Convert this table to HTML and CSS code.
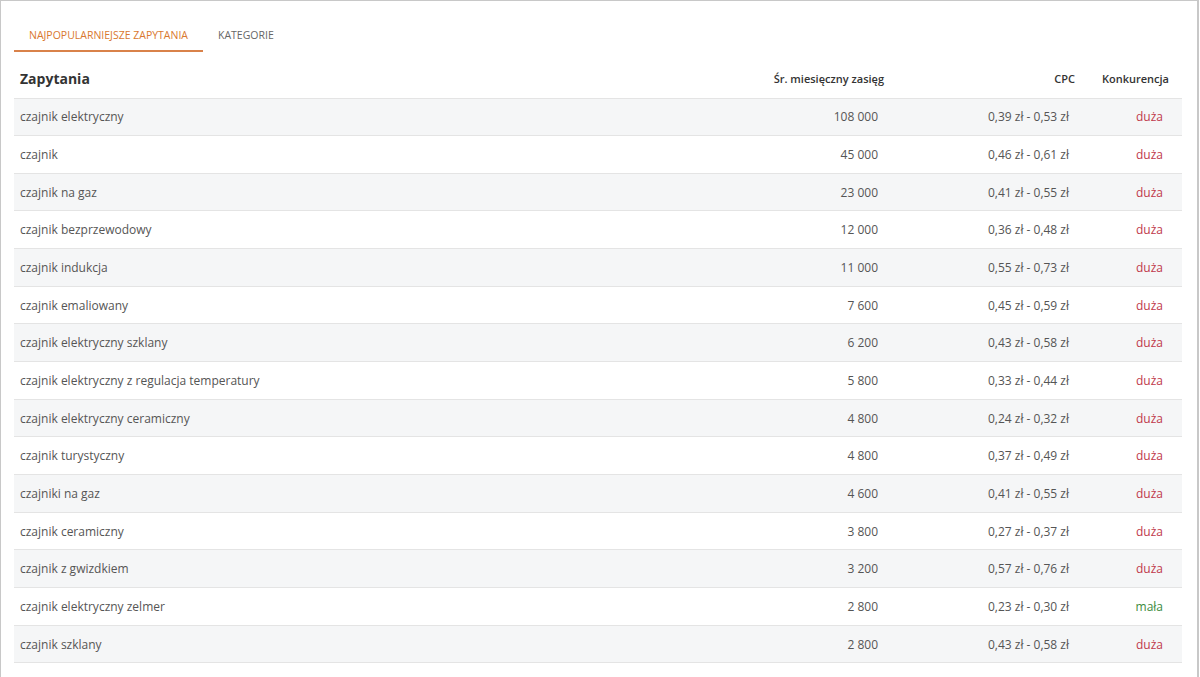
FILE: index.html
```html
<!DOCTYPE html>
<html lang="pl">
<head>
<meta charset="utf-8">
<title>Zapytania</title>
<link rel="stylesheet" href="styles.css">
</head>
<body>
<div class="frame">
  <ul class="tabs">
    <li class="tab active">Najpopularniejsze zapytania</li>
    <li class="tab">Kategorie</li>
  </ul>
  <table class="queries">
    <colgroup>
      <col class="w-name">
      <col class="w-num">
      <col class="w-cpc">
      <col class="w-comp">
    </colgroup>
    <thead>
      <tr>
        <th class="c-name">Zapytania</th>
        <th>Śr. miesięczny zasięg</th>
        <th>CPC</th>
        <th>Konkurencja</th>
      </tr>
    </thead>
    <tbody>
      <tr><td>czajnik elektryczny</td><td class="num">108 000</td><td class="num">0,39 zł - 0,53 zł</td><td class="num high">duża</td></tr>
      <tr><td>czajnik</td><td class="num">45 000</td><td class="num">0,46 zł - 0,61 zł</td><td class="num high">duża</td></tr>
      <tr><td>czajnik na gaz</td><td class="num">23 000</td><td class="num">0,41 zł - 0,55 zł</td><td class="num high">duża</td></tr>
      <tr><td>czajnik bezprzewodowy</td><td class="num">12 000</td><td class="num">0,36 zł - 0,48 zł</td><td class="num high">duża</td></tr>
      <tr><td>czajnik indukcja</td><td class="num">11 000</td><td class="num">0,55 zł - 0,73 zł</td><td class="num high">duża</td></tr>
      <tr><td>czajnik emaliowany</td><td class="num">7 600</td><td class="num">0,45 zł - 0,59 zł</td><td class="num high">duża</td></tr>
      <tr><td>czajnik elektryczny szklany</td><td class="num">6 200</td><td class="num">0,43 zł - 0,58 zł</td><td class="num high">duża</td></tr>
      <tr><td>czajnik elektryczny z regulacja temperatury</td><td class="num">5 800</td><td class="num">0,33 zł - 0,44 zł</td><td class="num high">duża</td></tr>
      <tr><td>czajnik elektryczny ceramiczny</td><td class="num">4 800</td><td class="num">0,24 zł - 0,32 zł</td><td class="num high">duża</td></tr>
      <tr><td>czajnik turystyczny</td><td class="num">4 800</td><td class="num">0,37 zł - 0,49 zł</td><td class="num high">duża</td></tr>
      <tr><td>czajniki na gaz</td><td class="num">4 600</td><td class="num">0,41 zł - 0,55 zł</td><td class="num high">duża</td></tr>
      <tr><td>czajnik ceramiczny</td><td class="num">3 800</td><td class="num">0,27 zł - 0,37 zł</td><td class="num high">duża</td></tr>
      <tr><td>czajnik z gwizdkiem</td><td class="num">3 200</td><td class="num">0,57 zł - 0,76 zł</td><td class="num high">duża</td></tr>
      <tr><td>czajnik elektryczny zelmer</td><td class="num">2 800</td><td class="num">0,23 zł - 0,30 zł</td><td class="num low">mała</td></tr>
      <tr><td>czajnik szklany</td><td class="num">2 800</td><td class="num">0,43 zł - 0,58 zł</td><td class="num high">duża</td></tr>
    </tbody>
  </table>
</div>
</body>
</html>
```
FILE: styles.css
```css
html, body {
  margin: 0;
  padding: 0;
  background: #fff;
}
body {
  font-family: "Open Sans", "Liberation Sans", sans-serif;
  color: #555;
}
.frame {
  width: 1199px;
  min-height: 700px;
  border: 1px solid #c8c8c8;
  border-right-width: 2px;
  padding: 0 16px 0 13px;
  box-sizing: border-box;
}
.tabs {
  list-style: none;
  margin: 0;
  padding: 19px 0 0;
  display: flex;
  height: 52px;
  box-sizing: border-box;
}
.tab {
  font-size: 10.5px;
  text-transform: uppercase;
  color: #666;
  padding: 8px 15px 0;
  height: 32px;
  box-sizing: border-box;
}
.tab.active {
  color: #d9782f;
  border-bottom: 2px solid #d9824a;
}
.queries {
  width: 1168px;
  table-layout: fixed;
  border-collapse: collapse;
  margin-top: 7px;
}
.w-name { width: 583px; }
.w-num { width: 300px; }
.w-cpc { width: 191px; }
.w-comp { width: 94px; }
.queries th {
  font-weight: 600;
  font-size: 11px;
  color: #333;
  text-align: right;
  padding: 0 13px 0 6px;
  height: 38px;
  box-sizing: border-box;
  vertical-align: middle;
}
.queries th.c-name {
  text-align: left;
  font-size: 14px;
  font-weight: 700;
  padding-left: 6px;
}
.queries td {
  font-size: 12px;
  padding: 0 6px;
  height: 37.67px;
  border-top: 1px solid #e4e4e4;
  box-sizing: border-box;
}
.queries tbody tr:nth-child(odd) {
  background: #f5f6f7;
}
.queries tbody tr:last-child td {
  border-bottom: 1px solid #e4e4e4;
}
.queries td.num {
  text-align: right;
  padding-right: 19px;
}
.high { color: #c0394b; }
.low { color: #3d8b3d; }
```
